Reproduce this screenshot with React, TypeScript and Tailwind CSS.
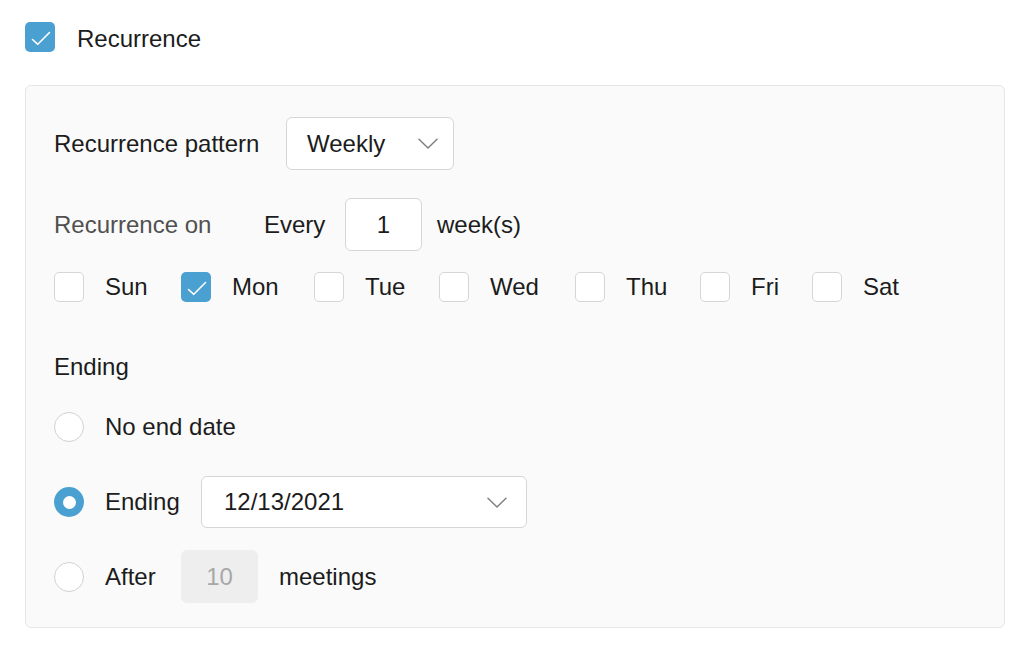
import React from "react";

const Check = () => (
  <svg width="30" height="30" viewBox="0 0 30 30" fill="none">
    <path d="M7.5 17.5 L12.8 22.3 L24.5 10.5" stroke="white" strokeWidth="1.6" strokeLinecap="round" strokeLinejoin="round" />
  </svg>
);

const Chevron = () => (
  <svg width="20" height="11" viewBox="0 0 20 11" fill="none">
    <path d="M1 1.2 L10 10 L19 1.2" stroke="#808080" strokeWidth="1.5" strokeLinecap="round" strokeLinejoin="round" />
  </svg>
);

const Box = ({ checked }: { checked?: boolean }) =>
  checked ? (
    <div className="w-[30px] h-[30px] rounded-[5px] bg-[#4aa0d0] flex items-center justify-center shrink-0">
      <Check />
    </div>
  ) : (
    <div className="w-[30px] h-[30px] rounded-[5px] bg-white border border-[#d6d6d6] shrink-0" />
  );

const Radio = ({ checked }: { checked?: boolean }) =>
  checked ? (
    <div className="w-[30px] h-[30px] rounded-full bg-[#4aa0d0] flex items-center justify-center shrink-0">
      <div className="w-[13px] h-[13px] rounded-full bg-white" />
    </div>
  ) : (
    <div className="w-[30px] h-[30px] rounded-full bg-white border border-[#d2d2d2] shrink-0" />
  );

const days = [
  { d: "Sun", c: false, w: "w-[127px]" },
  { d: "Mon", c: true, w: "w-[133px]" },
  { d: "Tue", c: false, w: "w-[125px]" },
  { d: "Wed", c: false, w: "w-[136px]" },
  { d: "Thu", c: false, w: "w-[125px]" },
  { d: "Fri", c: false, w: "w-[112px]" },
  { d: "Sat", c: false, w: "w-[112px]" },
];

export default function App() {
  return (
    <div
      className="w-[1024px] h-[651px] bg-white text-[24px] text-[#1c1c1c] overflow-hidden"
      style={{ fontFamily: '"Liberation Sans", Arial, sans-serif' }}
    >
      <div className="pt-[22px] pl-[25px] pr-[19px]">
        <div className="flex items-center h-[30px]">
          <Box checked />
          <span className="ml-[22px] pt-[3px]">Recurrence</span>
        </div>

        <div className="mt-[33px] border border-[#e6e6e6] rounded-[6px] bg-[#fafafa] pl-[28px] pt-[31px] pb-[24px]">
          <div className="flex items-center h-[53px]">
            <span className="w-[232px]">Recurrence pattern</span>
            <div className="w-[168px] h-[53px] bg-white border border-[#d6d6d6] rounded-[6px] flex items-center justify-between pl-[20px] pr-[15px]">
              <span>Weekly</span>
              <Chevron />
            </div>
          </div>

          <div className="flex items-center h-[53px] mt-[28px]">
            <span className="text-[#505050] w-[210px]">Recurrence on</span>
            <span className="w-[81px]">Every</span>
            <div className="w-[77px] h-[53px] bg-white border border-[#d6d6d6] rounded-[6px] flex items-center justify-center">
              1
            </div>
            <span className="ml-[15px]">week(s)</span>
          </div>

          <div className="flex items-center h-[30px] mt-[21px]">
            {days.map((x) => (
              <div key={x.d} className={`flex items-center gap-[21px] ${x.w}`}>
                <Box checked={x.c} />
                <span>{x.d}</span>
              </div>
            ))}
          </div>

          <div className="h-[28px] flex items-center mt-[51px]">Ending</div>

          <div className="flex items-center h-[30px] mt-[31px]">
            <Radio />
            <span className="ml-[21px]">No end date</span>
          </div>

          <div className="flex items-center h-[52px] mt-[34px]">
            <Radio checked />
            <span className="ml-[21px] w-[96px]">Ending</span>
            <div className="w-[326px] h-[52px] bg-white border border-[#d6d6d6] rounded-[6px] flex items-center justify-between pl-[22px] pr-[19px]">
              <span>12/13/2021</span>
              <Chevron />
            </div>
          </div>

          <div className="flex items-center h-[53px] mt-[22px]">
            <Radio />
            <span className="ml-[21px] w-[76px]">After</span>
            <div className="w-[77px] h-[53px] bg-[#eeeeee] rounded-[6px] flex items-center justify-center text-[#a8a8a8]">
              10
            </div>
            <span className="ml-[21px]">meetings</span>
          </div>
        </div>
      </div>
    </div>
  );
}
